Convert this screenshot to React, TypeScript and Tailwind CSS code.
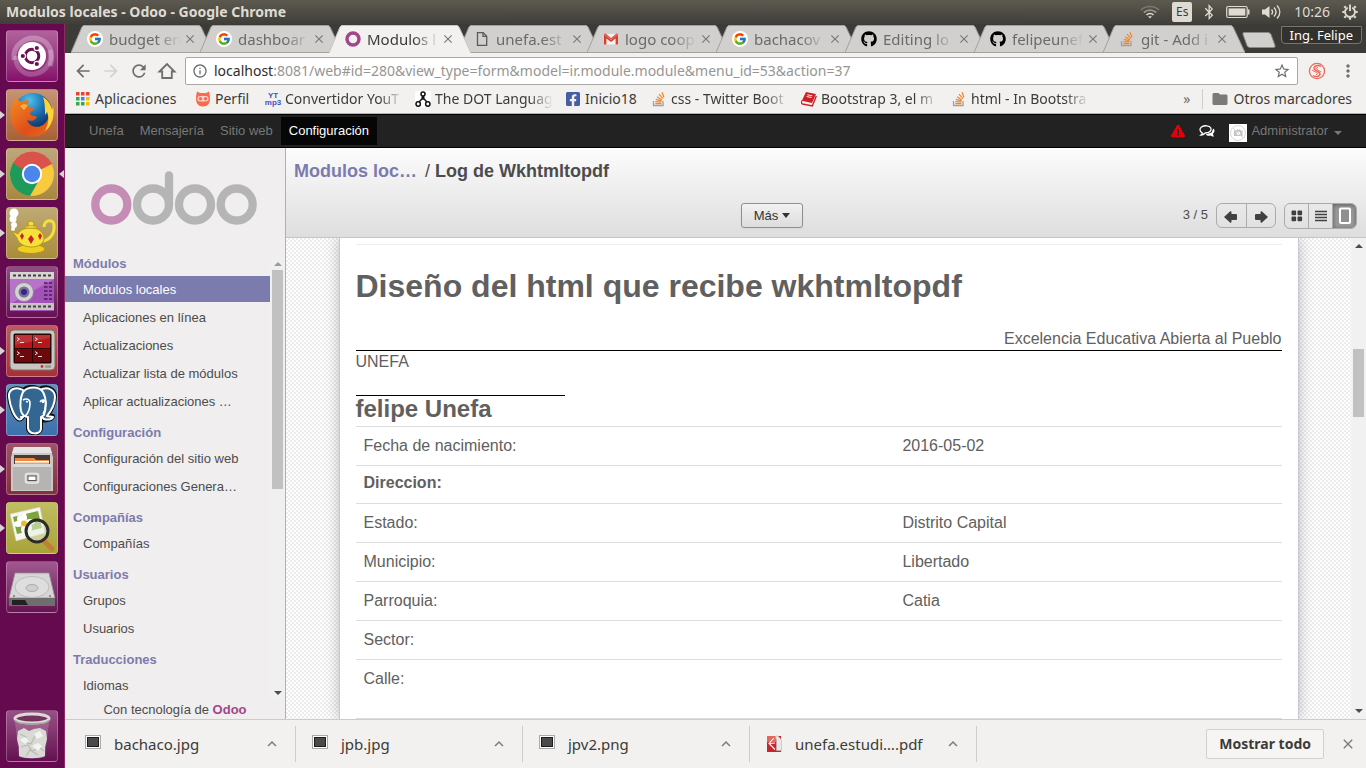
import React from "react";
import { FcGoogle } from "react-icons/fc";
import { FaGithub, FaFacebookSquare, FaBluetoothB, FaExclamationTriangle } from "react-icons/fa";
import {
  MdArrowBack,
  MdArrowForward,
  MdRefresh,
  MdInfoOutline,
  MdStarBorder,
  MdMoreVert,
  MdClose,
  MdFolder,
  MdKeyboardArrowUp,
} from "react-icons/md";

/* ---------- small glyphs ---------- */

function StackIcon() {
  return (
    <svg viewBox="0 0 16 16" className="size-4 shrink-0">
      <path d="M2.500 10v4.500h9.500V10" fill="none" stroke="#a0a0a0" strokeWidth="1.300" />
      <g stroke="#f0862c" strokeWidth="1.200">
        <path d="M4.300 12.700h6M4.300 10.700l6 .5M4.800 8.300l5.700 1.600M6 5.700l5 3.200M8 3.200l4 4.400M11 1.300l2 5.200" />
      </g>
    </svg>
  );
}

function GoogleIcon() {
  return (
    <span className="flex size-4 shrink-0 items-center justify-center rounded-full bg-white">
      <FcGoogle className="size-3.5" />
    </span>
  );
}

function OdooRing() {
  return (
    <svg viewBox="0 0 16 16" className="size-4 shrink-0">
      <circle cx="8" cy="8" r="6" fill="none" stroke="#a24689" strokeWidth="3.400" />
    </svg>
  );
}

function PageIcon() {
  return (
    <svg viewBox="0 0 16 16" className="size-4 shrink-0" fill="none" stroke="#5a5a5a" strokeWidth="1.300">
      <path d="M3.500 1.600h5.700l3.500 3.600v9.200H3.500z" />
      <path d="M9 1.600v3.800h3.700" />
    </svg>
  );
}

function GmailIcon() {
  return (
    <svg viewBox="0 0 16 16" className="size-4 shrink-0">
      <path d="M1 3h14v10.500H1z" fill="#f3f3f3" />
      <path d="M1 13.500V3.200L8 9l7-5.800v10.300h-2.400V7.400L8 11 3.400 7.400v6.100z" fill="#d8402f" />
      <path d="M1 3.200C1 2.400 2 2.200 2.600 2.600L8 7l5.400-4.400C14 2.200 15 2.400 15 3.200L8 9z" fill="#e4574b" />
    </svg>
  );
}

function AppsIcon() {
  const colors = ["#ea4335", "#ea4335", "#ea4335", "#34a853", "#4285f4", "#fbbc05", "#34a853", "#34a853", "#fbbc05"];
  return (
    <svg viewBox="0 0 16 16" className="size-4 shrink-0">
      {colors.map((c, i) => (
        <rect key={i} x={1 + (i % 3) * 5} y={1 + Math.floor(i / 3) * 5} width="3.500" height="3.500" fill={c} />
      ))}
    </svg>
  );
}

function OwlIcon() {
  return (
    <svg viewBox="0 0 16 16" className="size-4 shrink-0">
      <path d="M2 .5l3 1.500h6l3-1.500 .8 4c.8 6.500-1 11-6.800 11S.4 11 1.200 4.500z" fill="#fb6a4f" />
      <rect x="2.500" y="5" width="11" height="5.500" rx="2.700" fill="#fbd5cb" />
      <circle cx="5.500" cy="7.700" r="1.700" fill="#fb6a4f" />
      <circle cx="10.500" cy="7.700" r="1.700" fill="#fb6a4f" />
    </svg>
  );
}

function YtIcon() {
  return (
    <span className="flex size-4 shrink-0 flex-col items-center justify-center font-['Liberation_Sans',sans-serif] text-[8px] leading-[7px] font-bold text-[#3d55c4]">
      <span>YT</span>
      <span>mp3</span>
    </span>
  );
}

function DotIcon() {
  return (
    <svg viewBox="0 0 16 16" className="size-4 shrink-0" fill="none" stroke="#111" strokeWidth="1.500">
      <rect width="16" height="16" fill="#fff" stroke="none" />
      <circle cx="8" cy="3" r="2" />
      <circle cx="3.200" cy="13" r="2.200" />
      <circle cx="12.800" cy="13" r="2.200" />
      <path d="M7.500 5L7 8l-3 3M8.500 5L9 8l3 3M7 8h2" />
    </svg>
  );
}

function BookIcon() {
  return (
    <svg viewBox="0 0 16 16" className="size-4 shrink-0">
      <path d="M5 1l10 2-4 9L.8 9.700z" fill="#cf1f25" />
      <path d="M.8 9.700c-.8 1.500-.3 3 .7 3.300l9.800 2L15.300 5" fill="none" stroke="#cf1f25" strokeWidth="1.400" />
      <path d="M6.300 3.800l5 1M5.600 5.500l5 1" stroke="#fff" strokeWidth=".9" />
    </svg>
  );
}

function Tri({ up = false, className = "" }: { up?: boolean; className?: string }) {
  return (
    <svg viewBox="0 0 8 4" className={"h-1 w-2 " + className}>
      <path d={up ? "M0 4L4 0l4 4z" : "M0 0h8L4 4z"} fill="currentColor" />
    </svg>
  );
}

/* ---------- system panel ---------- */

function TopPanel() {
  return (
    <header className="flex h-6 shrink-0 items-center justify-between bg-linear-to-b from-[#5c5a50] to-[#403e39] pr-2 pl-1.5 text-[#dfdbd2]">
      <h1 className="text-sm font-bold whitespace-nowrap">Modulos locales - Odoo - Google Chrome</h1>
      <div className="flex items-center gap-3">
        <svg viewBox="0 0 20 14" className="h-3.5 w-5" fill="none" strokeWidth="1.700">
          <path d="M1 5C6 .3 14 .3 19 5" stroke="#7d7a72" />
          <path d="M3.800 7.500c3.700-3.300 8.700-3.300 12.400 0" stroke="#98958c" />
          <path d="M6.500 10c2-1.900 5-1.900 7 0" stroke="#dfdbd2" />
          <path d="M8 11.300h4l-2 2.200z" fill="#dfdbd2" />
        </svg>
        <span className="flex h-5 w-5 items-center justify-center rounded-xs bg-[#dfdbd2] text-xs text-[#3c3b37]">Es</span>
        <FaBluetoothB className="h-4 w-2.5" />
        <svg viewBox="0 0 24 14" className="h-3.5 w-6">
          <rect x=".7" y="1.500" width="20.500" height="11" rx="1.500" fill="none" stroke="#dfdbd2" strokeWidth="1.200" />
          <rect x="2.600" y="3.400" width="16.700" height="7.200" fill="#dfdbd2" />
          <path d="M22 4.500h1.500v5H22z" fill="#dfdbd2" />
        </svg>
        <svg viewBox="0 0 20 16" className="h-4 w-5" fill="none" stroke="#dfdbd2" strokeWidth="1.400">
          <path d="M0 5.500h3L7.500 2v12L3 10.500H0z" fill="#dfdbd2" stroke="none" />
          <path d="M9.500 5.500c1.300 1.500 1.300 3.500 0 5M12 3.500c2.500 2.700 2.500 6.300 0 9M15 1.500c3.700 4 3.700 9 0 13" />
        </svg>
        <time className="text-sm">10:26</time>
        <svg viewBox="0 0 16 16" className="size-4" fill="none" stroke="#dfdbd2">
          <path d="M5.700 3.600a5 5 0 1 0 4.600 0" strokeWidth="1.900" />
          <path d="M8 .5v6.500" strokeWidth="1.900" />
          <path d="M3.800 3.800L2.300 2.300M12.200 3.800l1.500-1.500M2.500 8H.3M13.500 8h2.200M3.800 12.200l-1.500 1.500M12.200 12.200l1.500 1.500M8 13.500v2.200" strokeWidth="2.200" />
        </svg>
      </div>
    </header>
  );
}

/* ---------- launcher ---------- */

const ubuntuArt = (
  <>
    <path d="M8 30C6 14 22 4 36 10c8 4 12 14 8 26" fill="none" stroke="#fff" strokeOpacity=".28" strokeWidth="5" />
    <path d="M44 20c4 14-8 26-22 24C14 42 9 34 10 26" fill="none" stroke="#fff" strokeOpacity=".22" strokeWidth="5" />
    <circle cx="26" cy="26" r="14" fill="#fff" />
    <circle cx="26" cy="26" r="6.800" fill="none" stroke="#6a1252" strokeWidth="3" />
    <g fill="#6a1252" stroke="#fff" strokeWidth="1.200">
      <circle cx="16.800" cy="26" r="2.700" />
      <circle cx="30.800" cy="18" r="2.700" />
      <circle cx="30.800" cy="34" r="2.700" />
    </g>
  </>
);

const firefoxArt = (
  <>
    <defs>
      <radialGradient id="ffGlobe" cx=".4" cy=".2" r=".8">
        <stop offset="0" stopColor="#4fc3ee" />
        <stop offset=".5" stopColor="#1c6fae" />
        <stop offset="1" stopColor="#0c2a60" />
      </radialGradient>
      <linearGradient id="ffFox" x1="0" y1="0" x2="1" y2="1">
        <stop offset="0" stopColor="#f58a1f" />
        <stop offset=".6" stopColor="#df4f1b" />
        <stop offset="1" stopColor="#e96d1d" />
      </linearGradient>
    </defs>
    <circle cx="27" cy="23" r="19" fill="url(#ffGlobe)" />
    <path d="M9 9l6 4c3-2 6-2 9-1-3 2-3 4-1 6l5 1c1 2-3 3-4 5 0 2 2 3 5 3l2 1c-2 5-8 4-10 3 2 6 9 9 16 5 7-5 8-15 5-22 7 9 7 19 0 27-9 9-25 9-33-1-6-8-6-20 0-31z" fill="url(#ffFox)" />
    <path d="M37 8c5 3 8 8 9 13l1-4c2 10-1 20-8 25 4-8 4-14 2-19l-2 3c0-7 0-12-2-18z" fill="#fcd43a" />
    <path d="M14 17c2-2 5-2 8-1l-4 5z" fill="#fbb040" />
  </>
);

const chromeArt = (
  <>
    <circle cx="26" cy="26" r="22" fill="#f9c93e" />
    <path d="M26 26L7 15A22 22 0 0 1 45.800 16z" fill="#d9534c" />
    <path d="M26 16h20A22 22 0 0 0 7 15l9.500 16z" fill="#d9534c" />
    <path d="M7 15a22 22 0 0 0 17 33l8-14-7-7z" fill="#1e9a5a" />
    <circle cx="26" cy="26" r="10.200" fill="#fff" />
    <circle cx="26" cy="26" r="8.200" fill="#4a86ec" />
  </>
);

const teapotArt = (
  <>
    <g fill="#fff">
      <circle cx="8" cy="6" r="4.500" />
      <circle cx="7" cy="12" r="3.500" />
      <circle cx="8" cy="18" r="3" />
      <circle cx="7" cy="22" r="2" />
    </g>
    <path d="M38 20c0-8 10-8 10-2 1 8-4 15-11 16" fill="none" stroke="#f5e13b" strokeWidth="3" />
    <ellipse cx="25" cy="42" rx="14" ry="4.500" fill="#f0cf24" stroke="#b0920f" />
    <path d="M6 24l6 3c2-4 6-6 13-6s12 3 13 10c0 6-6 9-13 9-8 0-13-5-14-9z" fill="#f6e03a" stroke="#bb9b14" />
    <circle cx="25" cy="17" r="3" fill="#f6e03a" stroke="#bb9b14" />
    <path d="M18 21c2-3 12-3 14 0z" fill="#fdf07a" stroke="#bb9b14" />
    <path d="M16 26l2 3-2 4-2-4zM25 28l3 4-3 5-3-5zM34 26l2 3-2 4-2-4z" fill="#c9202c" />
  </>
);

const cameraArt = (
  <>
    <rect x="4" y="6" width="44" height="39" fill="#a353b8" />
    <path d="M4 13h44L4 38z" fill="#c887d6" fillOpacity=".6" />
    <rect x="4" y="6" width="44" height="7" fill="#d7d5d2" />
    <rect x="4" y="37" width="44" height="7" fill="#c7c5c2" />
    <path d="M7 9.500h38M7 40.500h38" stroke="#4c3a4c" strokeWidth="2" strokeDasharray="3 2" />
    <path d="M38 17h8M38 21h8M38 25h8M38 29h8M38 33h8" stroke="#4b1c5c" strokeWidth="1.500" strokeDasharray="3.500 1.500" />
    <circle cx="18" cy="26" r="9.500" fill="#d3d2d5" stroke="#8c8a90" />
    <circle cx="18" cy="26" r="5.500" fill="#77758a" />
    <circle cx="18" cy="26" r="3" fill="#3d1f9c" />
  </>
);

const terminalArt = (
  <>
    <rect x="4" y="5" width="45" height="40" rx="4" fill="#c8c7c2" stroke="#77756f" />
    <rect x="7.500" y="8.500" width="38" height="30" rx="1.500" fill="#2a0404" />
    <path d="M9 10h17v13H9zM27 10h17v13H27z" fill="#b5171b" />
    <path d="M9 24h17v13H9zM27 24h17v13H27z" fill="#6d080c" />
    <path d="M9 10h35v3L9 20z" fill="#fff" fillOpacity=".12" />
    <path d="M11 12.500l2.500 1.700-2.500 1.700M29 12.500l2.500 1.700-2.500 1.700M11 26.500l2.500 1.700-2.500 1.700M29 26.500l2.500 1.700-2.500 1.700M14 17.500h4M32 17.500h4M14 31.500h4M32 31.500h4" fill="none" stroke="#f3dcdc" strokeWidth="1" />
    <circle cx="36" cy="41.500" r="1.400" fill="#e02a20" />
    <rect x="39" y="40.300" width="6" height="2.500" fill="#9b9992" />
  </>
);

const postgresArt = (
  <g strokeLinejoin="round">
    <path
      d="M17 6C10 2 2 5 3 13c1 9 5 19 9 22 3 2 5-2 7-5l3 3v12c1 6 12 6 13 0V36c4 1 12 0 12-4l-5-1c4-5 7-14 7-19 0-7-8-11-16-7-5-3-12-3-16 1z"
      fill="#336791"
      stroke="#111"
      strokeWidth="4"
    />
    <g stroke="#fff" strokeWidth="2" fill="#336791">
      <path d="M17 6C10 2 2 5 3 13c1 9 5 19 9 22 3 2 5-2 7-5l1-18z" />
      <path d="M34 6c8-4 15 0 15 7 0 8-4 14-8 19l6 1c-1 3-6 3-9 2l-4-4z" />
      <path d="M17 8c5-6 16-6 20 0 4 7 3 17 1 23l-3 2v12c-1 6-12 6-13-1V33c-4 0-6-3-7-6-1-6-1-13 2-19z" />
      <path d="M17 16c3-2 7-1 7 3 0 5-1 8-3 11-2 3-5 3-7 3M34 18c2-3 5-2 6 0-1 5 0 8-3 12" fill="none" strokeWidth="1.600" />
      <path d="M20 17.500l2 .5M36 18h2" strokeWidth="1.800" />
    </g>
  </g>
);

const filesArt = (
  <>
    <path d="M8 4h36l3 10v34H5V14z" fill="#c9c8c6" />
    <path d="M8 4h36l2 6H6z" fill="#e6e5e3" />
    <path d="M8 12h36v12H8z" fill="#4a3a33" />
    <path d="M9 15h19l2 2h13v6H9z" fill="#e88b46" />
    <path d="M9 18h34v4H9z" fill="#fff" />
    <path d="M9 19.500h34V24H9z" fill="#ef9f5e" />
    <path d="M7 21h38v26H7z" fill="#b5b4b2" />
    <path d="M7 21h38v3H7z" fill="#d9d8d6" />
    <rect x="19.500" y="30.500" width="13" height="9.500" rx="2" fill="#c9c8c6" stroke="#e9e8e6" strokeWidth="1.500" />
    <rect x="22" y="33" width="8" height="4.500" fill="#fff" stroke="#555" />
  </>
);

const imageSearchArt = (
  <>
    <path d="M4 12L34 5l5 26-29 8z" fill="#f7f7ef" stroke="#c9c9b4" strokeWidth=".6" />
    <path d="M7 15l25-6 4 17-25 6z" fill="#7da53c" />
    <g fill="#fff">
      <ellipse cx="18" cy="16" rx="3" ry="5" />
      <ellipse cx="18" cy="27" rx="3" ry="5" />
      <ellipse cx="12" cy="22" rx="5" ry="3" />
      <ellipse cx="24" cy="20" rx="5" ry="3" />
      <ellipse cx="14" cy="17" rx="3" ry="4" />
      <ellipse cx="23" cy="26" rx="3" ry="4" />
    </g>
    <circle cx="18" cy="21.500" r="3" fill="#eebb2c" />
    <path d="M37 38l9 9" stroke="#c27f33" strokeWidth="5" strokeLinecap="round" />
    <circle cx="31" cy="29" r="11" fill="#e8f0e0" fillOpacity=".55" stroke="#2b2b2b" strokeWidth="3" />
  </>
);

const diskArt = (
  <>
    <path d="M9 12h34l6 25H3z" fill="#d6d6d6" stroke="#8f8f8f" strokeWidth=".8" />
    <path d="M3 37h46v8H3z" fill="#6e6e6e" />
    <path d="M6 39h13l3 5H6z" fill="#222" />
    <ellipse cx="26" cy="26" rx="17" ry="10.500" fill="#dedede" stroke="#bcbcbc" />
    <ellipse cx="26" cy="27" rx="6" ry="3.500" fill="#cfcfcf" stroke="#aaa" />
    <circle cx="8" cy="35" r="1" fill="#777" />
    <circle cx="44" cy="35" r="1" fill="#777" />
  </>
);

const trashArt = (
  <>
    <path d="M9 12h34l-4 35c-6 2-20 2-26 0z" fill="#fff" fillOpacity=".18" />
    <path d="M12 21l6-3 5 3 5-2 6-1 6 3 1 8-2 8v9c-6 3-20 3-26 0v-9l-2-8z" fill="#d9dad6" />
    <path d="M14 24l6 3-2 5 7 2 4-8 7-2M15 37l7-2 4 6 8-3 4 3M20 46l4-6 8 5" fill="none" stroke="#b9bab5" strokeWidth="1.200" />
    <path d="M14 30l5-3 4 4-4 3zM28 24l6-3 3 5-6 3zM26 36l6-3 4 3-4 5z" fill="#f3f4f1" />
    <ellipse cx="26" cy="8.500" rx="17" ry="4.500" fill="#74335f" stroke="#dcdcd6" strokeWidth="3" />
    <path d="M9 10c2 5 32 5 34 0" fill="none" stroke="#a5a5a0" strokeWidth="1.500" />
  </>
);

interface LauncherEntry {
  name: string;
  art: React.ReactNode;
  tile: string;
  running?: boolean;
  focused?: boolean;
}

const launcher: LauncherEntry[] = [
  { name: "Ubuntu", art: ubuntuArt, tile: "from-[#b0629d] to-[#860d6c]" },
  { name: "Firefox", art: firefoxArt, tile: "from-[#c59576] to-[#a96035]", running: true },
  { name: "Google Chrome", art: chromeArt, tile: "from-[#bfa67c] to-[#a8883e]", running: true, focused: true },
  { name: "Tetera", art: teapotArt, tile: "from-[#bfaa75] to-[#aa8b3a]", running: true },
  { name: "Grabador", art: cameraArt, tile: "from-[#8f4d83] to-[#661052]" },
  { name: "Terminator", art: terminalArt, tile: "from-[#c0585f] to-[#a82f38]", running: true },
  { name: "pgAdmin", art: postgresArt, tile: "from-[#5f90bf] to-[#3c71aa]", running: true },
  { name: "Archivos", art: filesArt, tile: "from-[#9d5468] to-[#85303c]", running: true },
  { name: "Visor de imágenes", art: imageSearchArt, tile: "from-[#c0bd62] to-[#a8a338]", running: true },
  { name: "Disco", art: diskArt, tile: "from-[#a0588f] to-[#671252]" },
];

function LauncherTile({ entry }: { entry: LauncherEntry }) {
  return (
    <div className="relative flex justify-center">
      {entry.running && (
        <svg viewBox="0 0 5 8" className="absolute top-[22px] left-0 h-2 w-[5px]">
          <path d="M0 0l5 4-5 4z" fill="#d8d4d4" />
        </svg>
      )}
      <button
        aria-label={entry.name}
        className={"size-[52px] overflow-hidden rounded-sm border border-white/25 bg-linear-to-b " + entry.tile}
      >
        <svg viewBox="1 1 50 50" className="size-full">
          {entry.art}
        </svg>
      </button>
      {entry.focused && (
        <svg viewBox="0 0 5 8" className="absolute top-[22px] right-0 h-2 w-[5px]">
          <path d="M5 0L0 4l5 4z" fill="#d8d4d4" />
        </svg>
      )}
    </div>
  );
}

function Launcher() {
  return (
    <nav className="flex w-[65px] shrink-0 flex-col gap-[7px] border-r border-[#8f2c5f] bg-[#650a4f] pt-1.5 pb-1.5">
      {launcher.map((e) => (
        <LauncherTile key={e.name} entry={e} />
      ))}
      <div className="mt-auto">
        <LauncherTile entry={{ name: "Papelera", art: trashArt, tile: "from-[#9a4f88] to-[#640f50]" }} />
      </div>
    </nav>
  );
}

/* ---------- browser chrome ---------- */

const tabs = [
  { label: "budget en", icon: <GoogleIcon /> },
  { label: "dashboar", icon: <GoogleIcon /> },
  { label: "Modulos l", icon: <OdooRing />, active: true },
  { label: "unefa.est", icon: <PageIcon /> },
  { label: "logo coop", icon: <GmailIcon /> },
  { label: "bachacov", icon: <GoogleIcon /> },
  { label: "Editing lo", icon: <FaGithub className="size-4 shrink-0 text-black" /> },
  { label: "felipeunef", icon: <FaGithub className="size-4 shrink-0 text-black" /> },
  { label: "git - Add i", icon: <StackIcon /> },
];

function TabStrip() {
  return (
    <div className="flex h-[29px] items-end bg-[#3c3b37] pl-1.5">
      {tabs.map((t) => (
        <div
          key={t.label}
          className={"relative -mr-[13px] flex h-7 w-[142px] shrink-0 items-center pr-4 pl-4 " + (t.active ? "z-10" : "")}
        >
          <svg viewBox="0 0 142 28" preserveAspectRatio="none" className="absolute inset-0 size-full">
            <path d="M0 28L11 2Q12 0 14 0H127Q129 0 130 2L142 28z" fill={t.active ? "#f2f1ef" : "#d2d0ce"} />
            <path
              d={t.active ? "M0 28L11 2Q12 .5 14 .5H127Q129 .5 130 2L142 28" : "M0 27.500L11 2Q12 .5 14 .5H127Q129 .5 130 2L142 27.500z"}
              fill="none"
              stroke={t.active ? "#c8c6c3" : "#a3a19e"}
            />
          </svg>
          <span className="relative flex min-w-0 flex-1 items-center">
            {t.icon}
            <span
              className={
                "ml-1.5 min-w-0 flex-1 text-[15px] leading-5 whitespace-nowrap [mask-image:linear-gradient(to_right,black_65%,transparent)] " +
                (t.active ? "text-[#3c3b37]" : "text-[#6b6a67]")
              }
            >
              {t.label}
            </span>
            <button aria-label={"Cerrar " + t.label} className="ml-0.5 flex size-3.5 shrink-0 items-center justify-center text-[#7a7977]">
              <MdClose className="size-3.5" />
            </button>
          </span>
        </div>
      ))}
      <button aria-label="Pestaña nueva" className="ml-2.5 h-[22px] w-[34px] shrink-0 self-start pt-2">
        <svg viewBox="0 0 34 16" className="h-4 w-[34px]">
          <path d="M2 .5h24q2 0 3 2l4 11q.5 2-1.500 2H8q-2 0-3-2L1 2.500Q.5.500 2 .5z" fill="#d2d0ce" stroke="#8b8986" />
        </svg>
      </button>
      <button className="mt-0.5 mr-1 ml-auto h-[18px] shrink-0 self-start rounded-b-sm border border-[#77756f] bg-[#32312e] px-2 text-[13px] leading-4 text-white">
        Ing. Felipe
      </button>
    </div>
  );
}

function Toolbar() {
  return (
    <div className="flex h-9 items-center gap-2 bg-[#f2f1ef] pr-2 pl-2 text-[#6f6e6c]">
      <button aria-label="Atrás"><MdArrowBack className="size-5" /></button>
      <button aria-label="Adelante" className="text-[#d4d2d0]"><MdArrowForward className="size-5" /></button>
      <button aria-label="Recargar"><MdRefresh className="size-5" /></button>
      <button aria-label="Inicio">
        <svg viewBox="0 0 20 20" className="size-5" fill="none" stroke="currentColor" strokeWidth="1.800">
          <path d="M2.500 10.500L10 3l7.500 7.500h-2.700V17H5.200v-6.500z" />
        </svg>
      </button>
      <div className="flex h-7 min-w-0 flex-1 items-center gap-1.5 rounded-xs border border-[#a9a7a4] bg-white px-1.5">
        <MdInfoOutline className="size-4 shrink-0" />
        <div className="relative min-w-0 flex-1 text-sm leading-5">
          <input aria-label="Dirección" defaultValue="localhost:8081/web#id=280&view_type=form&model=ir.module.module&menu_id=53&action=37" className="w-full bg-transparent text-[#979593] outline-none" />
          <span aria-hidden="true" className="pointer-events-none absolute top-0 left-0 bg-white text-[#2e2d2b]">localhost</span>
        </div>
        <MdStarBorder className="size-[18px] shrink-0" />
      </div>
      <button aria-label="Extensión" className="ml-0.5">
        <svg viewBox="0 0 18 18" className="size-[18px]" fill="none" stroke="#ec6a5a">
          <circle cx="9" cy="9" r="7.600" strokeWidth="1.300" />
          <path d="M13 4.500C10 2.500 5.500 3.800 6.300 6.800c.7 2.700 5.700 2.200 5.700 5 0 2.700-4 3.700-7 1.700" strokeWidth="1.500" />
          <path d="M10 5.500c-2 0-2 1.500-.5 2.200l3.500 2.300M8 12.500c2 0 2-1.500.5-2L4 8" strokeWidth="1" />
        </svg>
      </button>
      <button aria-label="Menú" className="ml-1"><MdMoreVert className="size-5" /></button>
    </div>
  );
}

const fade = "w-[118px] [mask-image:linear-gradient(to_right,black_80%,transparent)]";

const bookmarks = [
  { label: "Aplicaciones", icon: <AppsIcon />, width: "w-[88px]" },
  { label: "Perfil", icon: <OwlIcon />, width: "w-[38px]" },
  { label: "Convertidor YouT", icon: <YtIcon />, width: fade },
  { label: "The DOT Languag", icon: <DotIcon />, width: fade },
  { label: "Inicio18", icon: <FaFacebookSquare className="size-4 shrink-0 text-[#4460a0]" />, width: "w-[54px]" },
  { label: "css - Twitter Boot", icon: <StackIcon />, width: fade },
  { label: "Bootstrap 3, el m", icon: <BookIcon />, width: fade },
  { label: "html - In Bootstra", icon: <StackIcon />, width: fade },
];

function BookmarkBar() {
  return (
    <div className="flex h-[25px] items-center gap-3 border-b border-[#b6b4b2] bg-[#f2f1ef] pr-3.5 pb-1 pl-2.5 text-sm leading-5 whitespace-nowrap text-[#3c3b37]">
      {bookmarks.map((b) => (
        <a key={b.label} href="#" className="flex shrink-0 items-center gap-1">
          {b.icon}
          <span className={b.width}>{b.label}</span>
        </a>
      ))}
      <button aria-label="Más marcadores" className="ml-auto text-[#6f6e6c]">»</button>
      <a href="#" className="flex shrink-0 items-center gap-1 border-l border-[#cfcdcb] pl-2">
        <MdFolder className="size-[18px] text-[#7c7a78]" />
        <span>Otros marcadores</span>
      </a>
    </div>
  );
}

/* ---------- odoo ---------- */

function OdooNav() {
  const items = ["Unefa", "Mensajería", "Sitio web"];
  return (
    <nav className="flex h-[34px] shrink-0 items-center border-t border-b border-black bg-[#222] pr-6 pl-4 text-[13px] leading-[18px] text-[#777]">
      {items.map((i) => (
        <a key={i} href="#" className="px-2">{i}</a>
      ))}
      <a href="#" className="bg-black/80 px-2 py-[5px] text-white">Configuración</a>
      <div className="ml-auto flex items-center">
        <FaExclamationTriangle className="mr-3.5 size-3.5 text-red-600" />
        <svg viewBox="0 0 16 14" className="mr-3.5 h-3.5 w-4">
          <path d="M15 12.500c-1 .3-2.500-.2-3.300-.9-2 .5-4.200 0-5-1.200l6-1.800 1.500-4.200c2 1.500 1.600 4-.3 5.300.1 1.200.6 2 1.100 2.800z" fill="#fff" />
          <path d="M2 11c1-.8 1.300-1.500 1.200-2.200C.5 7.500.3 4.500 2.500 3c3-2 8-1.500 9.300 1 1.200 2.500-1.300 5-5.600 5C5 10.200 3.500 11 2 11z" fill="#222" stroke="#fff" strokeWidth="1.300" />
        </svg>
        <svg viewBox="0 0 18 18" className="mt-1 mr-1 size-[18px]">
          <rect width="18" height="18" fill="#fff" />
          <circle cx="9" cy="9" r="7.500" fill="none" stroke="#d8d8d8" />
          <path d="M5 6.500h2l1-1h3l1 1h1.500V12H5z" fill="#c4c4c4" />
          <circle cx="9.300" cy="9.200" r="1.800" fill="#fff" />
          <path d="M4 4l10 10" stroke="#d8d8d8" />
        </svg>
        <button className="flex items-center gap-1.5">
          Administrator
          <Tri className="mt-1" />
        </button>
      </div>
    </nav>
  );
}

const sections = [
  { title: "Módulos", items: ["Modulos locales", "Aplicaciones en línea", "Actualizaciones", "Actualizar lista de módulos", "Aplicar actualizaciones …"] },
  { title: "Configuración", items: ["Configuración del sitio web", "Configuraciones Genera…"] },
  { title: "Compañías", items: ["Compañías"] },
  { title: "Usuarios", items: ["Grupos", "Usuarios"] },
  { title: "Traducciones", items: ["Idiomas"] },
];

function Sidebar() {
  return (
    <aside className="flex w-[221px] shrink-0 flex-col border-r border-[#afafb6] bg-[#f0eeee] text-[13px] leading-5">
      <div className="flex h-[98px] shrink-0 justify-center pt-[23px] pr-0.5">
        <svg viewBox="0 0 166 54" className="h-[54px] w-[166px]" fill="none" strokeWidth="8.300" strokeLinecap="round" role="img" aria-label="odoo">
          <circle cx="20.300" cy="33.500" r="16" stroke="#c58cb5" />
          <g stroke="#b5b5b5">
            <circle cx="62" cy="33.500" r="16" />
            <path d="M78 4.500v29" />
            <circle cx="104" cy="33.500" r="16" />
            <circle cx="145.700" cy="33.500" r="16" />
          </g>
        </svg>
      </div>
      <div className="flex min-h-0 flex-1">
        <div className="min-w-0 flex-1 overflow-hidden">
          {sections.map((s) => (
            <section key={s.title}>
              <h3 className="h-[29px] pt-2 pl-2 font-bold text-[#7c7bad]">{s.title}</h3>
              <ul>
                {s.items.map((i) => (
                  <li key={i} className="py-px">
                    <a
                      href="#"
                      className={"block pt-1 pb-0.5 pl-[18px] whitespace-nowrap " + (i === "Modulos locales" ? "bg-[#7c7bad] text-white" : "text-[#4c4c4c]")}
                    >
                      {i}
                    </a>
                  </li>
                ))}
              </ul>
            </section>
          ))}
        </div>
        <div className="mt-3 flex w-[15px] flex-col items-center bg-[#f1f0f0] pt-1 pb-1">
          <Tri up className="text-[#9b9b9b]" />
          <div className="mt-1 h-[219px] w-[11px] bg-[#c1c1c1]" />
          <Tri className="mt-auto text-[#4c4c4c]" />
        </div>
      </div>
      <p className="h-5 shrink-0 text-center leading-[22px] text-[#4c4c4c]">
        Con tecnología de <a href="#" className="font-bold text-[#a24689]">Odoo</a>
      </p>
    </aside>
  );
}

function ControlPanel() {
  return (
    <div className="h-[90px] shrink-0 border-b border-[#c4c4c8] bg-linear-to-b from-[#fcfcfc] to-[#dedede] px-2 text-[#4c4c4c]">
      <h2 className="flex h-[46px] items-center text-lg font-bold whitespace-pre">
        <a href="#" className="w-[122px] text-[#7c7bad]">Modulos loc…</a>
        <span className="w-[19px] pr-[5px] text-right font-normal">/</span>
        <span>Log de Wkhtmltopdf</span>
      </h2>
      <div className="grid grid-cols-[447fr_auto_555fr] items-start pt-[9px] text-[13px] leading-6">
        <span />
        <button className="flex h-[25px] items-center gap-1 rounded-[3px] border border-[#8f8f8f] bg-linear-to-b from-[#f2f2f2] to-[#dcdcdc] px-3 text-[#333] shadow-xs">
          Más
          <svg viewBox="0 0 8 5" className="h-[5px] w-2"><path d="M0 0h8L4 5z" fill="#333" /></svg>
        </button>
        <div className="flex items-start justify-end gap-2 pr-px">
          <span>3 / 5</span>
          <div className="flex h-[25px] w-[60px] rounded-md border border-[#ababab]">
            <button aria-label="Anterior" className="flex flex-1 items-center justify-center border-r border-[#ababab]">
              <svg viewBox="0 0 14 12" className="mt-0.5 h-3 w-3.5"><path d="M0 6l6-5.500q1.500-.7 1.500 1V3H12q1 0 1 1v4q0 1-1 1H7.500v1.500q0 1.700-1.500 1z" fill="#404040" /></svg>
            </button>
            <button aria-label="Siguiente" className="flex flex-1 items-center justify-center">
              <svg viewBox="0 0 14 12" className="mt-0.5 h-3 w-3.5"><path d="M14 6L8 .5q-1.500-.7-1.500 1V3H2Q1 3 1 4v4q0 1 1 1h4.500v1.500q0 1.700 1.500 1z" fill="#404040" /></svg>
            </button>
          </div>
          <div className="flex h-[26px] w-[73px] overflow-hidden rounded-md border border-[#ababab]">
            <button aria-label="Kanban" className="flex flex-1 items-center justify-center border-r border-[#ababab]">
              <svg viewBox="0 0 12 12" className="size-3" fill="#404040">
                <rect x=".5" y=".5" width="4.600" height="4.800" rx="1" /><rect x="6.500" y=".5" width="4.600" height="4.800" rx="1" />
                <rect x=".5" y="6.500" width="4.600" height="4.800" rx="1" /><rect x="6.500" y="6.500" width="4.600" height="4.800" rx="1" />
              </svg>
            </button>
            <button aria-label="Lista" className="flex flex-1 items-center justify-center border-r border-[#ababab]">
              <svg viewBox="0 0 12 12" className="size-3" stroke="#404040" strokeWidth="1.500">
                <path d="M0 1.500h12M0 4.500h12M0 7.500h12M0 10.500h12" />
              </svg>
            </button>
            <button aria-label="Formulario" className="flex flex-1 items-center justify-center bg-[#999] shadow-[inset_0_1px_4px_rgba(0,0,0,.4)]">
              <svg viewBox="0 0 14 18" className="h-[18px] w-3.5">
                <rect x="2" y="1.500" width="10" height="14.500" rx="1" fill="#8f8f8f" stroke="#fff" strokeWidth="2" />
              </svg>
            </button>
          </div>
        </div>
      </div>
    </div>
  );
}

const rows: { label: string; value: string; tall?: string; bold?: boolean }[] = [
  { label: "Fecha de nacimiento:", value: "2016-05-02" },
  { label: "Direccion:", value: "", bold: true, tall: "h-[38px]" },
  { label: "Estado:", value: "Distrito Capital" },
  { label: "Municipio:", value: "Libertado" },
  { label: "Parroquia:", value: "Catia" },
  { label: "Sector:", value: "" },
  { label: "Calle:", value: "", tall: "h-[59px]" },
];

function Sheet() {
  return (
    <div className="flex min-h-0 flex-1">
      <div className="min-w-0 flex-1 overflow-hidden bg-[repeating-conic-gradient(#ececec_0_25%,#ffffff_0_50%)] bg-size-[4px_4px]">
        <article className="mx-auto min-h-full max-w-[960px] border-x border-[#c8c8d3] bg-white px-4 pt-1.5 text-base leading-[22px] text-[#606060] shadow-[0_0_14px_rgba(0,0,0,.25)]">
          <hr className="border-[#eee]" />
          <h1 className="mt-[21px] text-[32px] leading-10 font-bold">Diseño del html que recibe wkhtmltopdf</h1>
          <p className="mt-[22px] border-b border-black text-right">Excelencia Educativa Abierta al Pueblo</p>
          <p>UNEFA</p>
          <hr className="mt-[22px] w-[209px] border-black" />
          <h2 className="h-[30px] text-2xl leading-[26px] font-bold">felipe Unefa</h2>
          <table className="w-full table-fixed border-separate border-spacing-0 border-b border-[#ddd]">
            <tbody>
              {rows.map((r) => (
                <tr key={r.label} className={r.tall ?? "h-[39px]"}>
                  <td className={"w-[58.200%] border-t border-[#ddd] px-2 align-top " + (r.bold ? "pt-1.5 font-bold" : "pt-2")}>{r.label}</td>
                  <td className="border-t border-[#ddd] px-2 pt-2 align-top">{r.value}</td>
                </tr>
              ))}
            </tbody>
          </table>
        </article>
      </div>
      <div className="flex w-[15px] shrink-0 flex-col items-center bg-[#f1f1f1] py-1.5 text-[#4c4c4c]">
        <Tri up />
        <div className="mt-[101px] h-[68px] w-[11px] bg-[#c1c1c1]" />
        <Tri className="mt-auto" />
      </div>
    </div>
  );
}

/* ---------- downloads ---------- */

const downloads = ["bachaco.jpg", "jpb.jpg", "jpv2.png", "unefa.estudi….pdf"];

function Downloads() {
  return (
    <footer className="flex h-[49px] shrink-0 items-center border-t border-[#ceccca] bg-[#f2f1ef] pr-2.5 pl-1 text-[#3c3b37]">
      {downloads.map((d) => (
        <div key={d} className="flex h-9 w-[227px] shrink-0 items-center gap-[13px] border-r border-[#cfcdcb] pr-3.5 pl-4">
          {d.endsWith("pdf") ? (
            <svg viewBox="0 0 16 18" className="h-[18px] w-4 shrink-0">
              <path d="M1 1h14v16H1z" fill="#c9252f" />
              <path d="M1 1h9v6H1z" fill="#e0685c" />
              <path d="M9.500 1H12l3.500 4v10.500h-5V6z" fill="#e9e7e4" stroke="#b9b6b2" strokeWidth=".6" />
              <path d="M8 3L3 8.500l6 6M3 8.500L9 8" fill="none" stroke="#fff" strokeWidth="1.100" />
            </svg>
          ) : (
            <svg viewBox="0 0 16 14" className="mb-1 h-3.5 w-4 shrink-0">
              <rect x=".5" y=".5" width="15" height="13" fill="#fff" stroke="#a9a9a9" />
              <rect x="2.500" y="2.500" width="11" height="9" fill="#4a4a4a" stroke="#1c1c1c" />
            </svg>
          )}
          <span className="text-[15px] leading-5 whitespace-nowrap">{d}</span>
          <button aria-label={"Opciones de " + d} className="ml-auto text-[#7a7977]">
            <MdKeyboardArrowUp className="size-[18px]" />
          </button>
        </div>
      ))}
      <button className="ml-auto h-[30px] shrink-0 rounded-xs border border-[#d2d0ce] bg-[#f6f5f4] px-3 text-sm font-bold">
        Mostrar todo
      </button>
      <button aria-label="Cerrar" className="ml-4 text-[#7a7977]"><MdClose className="size-4" /></button>
    </footer>
  );
}

export default function App() {
  return (
    <div className="flex h-screen flex-col overflow-hidden font-['Noto_Sans',sans-serif]">
      <TopPanel />
      <div className="flex min-h-0 flex-1">
        <Launcher />
        <main className="flex min-w-0 flex-1 flex-col">
          <TabStrip />
          <Toolbar />
          <BookmarkBar />
          <div className="flex min-h-0 flex-1 flex-col font-['Liberation_Sans',Arial,sans-serif]">
            <OdooNav />
            <div className="flex min-h-0 flex-1">
              <Sidebar />
              <div className="flex min-w-0 flex-1 flex-col">
                <ControlPanel />
                <Sheet />
              </div>
            </div>
          </div>
          <Downloads />
        </main>
      </div>
    </div>
  );
}
